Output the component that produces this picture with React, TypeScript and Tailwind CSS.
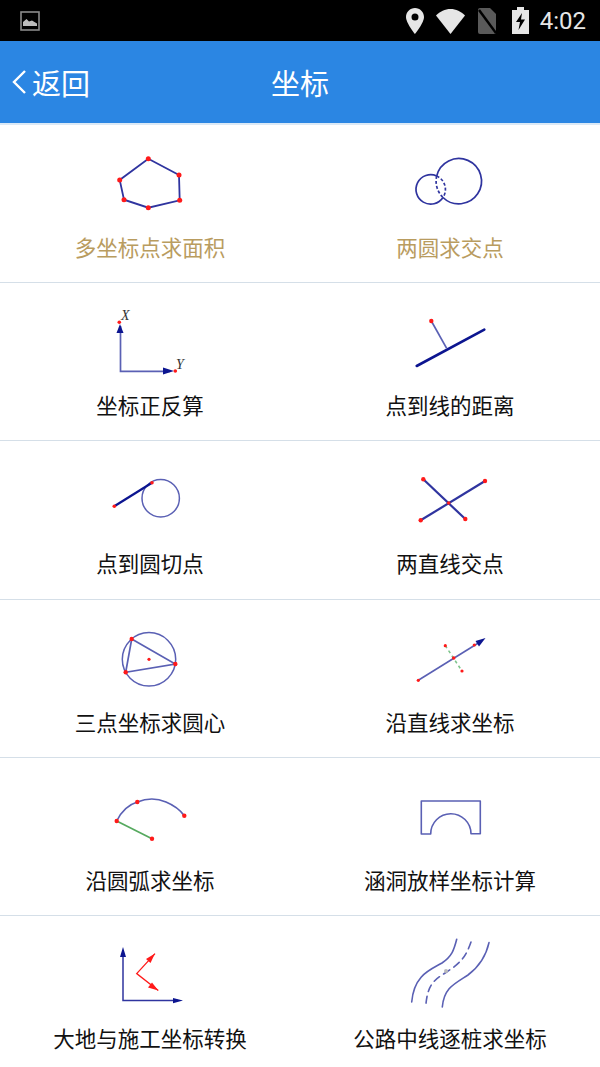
import React from 'react'

const NAVY = '#2f349f'
const DARK = '#0c1590'
const THIN = '#5a60b4'
const RED = '#ff1a1a'

const Dot = ({ x, y, r = 2.2 }: { x: number; y: number; r?: number }) => (
  <circle cx={x} cy={y} r={r} fill={RED} />
)

const Polygon = () => {
  const pts: [number, number][] = [
    [58.3, 17.7],
    [89, 34],
    [89.7, 59.3],
    [58.3, 66.7],
    [34, 58.7],
    [29.7, 39],
  ]
  return (
    <>
      <polygon points={pts.map((p) => p.join(',')).join(' ')} fill="none" stroke={NAVY} strokeWidth={1.8} />
      {pts.map((p) => (
        <Dot key={p[0]} x={p[0]} y={p[1]} r={2.5} />
      ))}
    </>
  )
}

const TwoCircles = () => (
  <g fill="none" stroke={NAVY} strokeWidth={1.7}>
    <path d="M46.7 35A22.7 22.7 0 1 1 53 56.5" />
    <path d="M46.7 35A14.7 14.7 0 1 0 53 56.5" />
    <path d="M46.7 35A14.7 14.7 0 0 1 53 56.5" strokeDasharray="3 2" />
    <path d="M46.7 35A22.7 22.7 0 0 0 53 56.5" strokeDasharray="3 2" />
  </g>
)

const Axes = () => (
  <>
    <path d="M30.5 27V72.3H80" fill="none" stroke={THIN} strokeWidth={1.7} />
    <path d="M30 25L26.500 34H33.500Z" fill={DARK} />
    <path d="M84 72L73 68.500V75.500Z" fill={DARK} />
    <Dot x={29.3} y={23.3} r={1.8} />
    <Dot x={85.3} y={72} r={1.8} />
    <text x={31} y={21} fontSize={14} fontStyle="italic" fontFamily="'Liberation Serif', serif" fill="#333">
      X
    </text>
    <text x={86} y={70} fontSize={14} fontStyle="italic" fontFamily="'Liberation Serif', serif" fill="#333">
      Y
    </text>
  </>
)

const PointToLine = () => (
  <>
    <line x1={26.7} y1={67} x2={94.3} y2={30.7} stroke={DARK} strokeWidth={2.6} strokeLinecap="round" />
    <line x1={41.3} y1={22} x2={56.7} y2={49.3} stroke={THIN} strokeWidth={1.7} />
    <Dot x={41.3} y={22} />
  </>
)

const Tangent = () => (
  <>
    <circle cx={70.7} cy={41.3} r={18.7} fill="none" stroke={THIN} strokeWidth={1.5} />
    <line x1={24.3} y1={49.3} x2={62} y2={25.7} stroke={DARK} strokeWidth={2.2} />
    <Dot x={24.3} y={49.3} r={1.8} />
    <Dot x={62} y={25.7} r={1.8} />
  </>
)

const Crossing = () => (
  <>
    <line x1={33.3} y1={22.3} x2={75.3} y2={62} stroke={NAVY} strokeWidth={2.2} />
    <line x1={30.7} y1={63.3} x2={95} y2={24} stroke={NAVY} strokeWidth={2.2} />
    <Dot x={33.3} y={22.3} />
    <Dot x={75.3} y={62} />
    <Dot x={30.7} y={63.3} />
    <Dot x={95} y={24} />
    <Dot x={58.7} y={46} r={1.8} />
  </>
)

const Circumcircle = () => (
  <>
    <circle cx={59} cy={43.3} r={26.7} fill="none" stroke={THIN} strokeWidth={1.5} />
    <polygon points="41.7,23 85.3,48 35.7,56.3" fill="none" stroke={THIN} strokeWidth={1.7} />
    <Dot x={41.7} y={23} />
    <Dot x={85.3} y={48} />
    <Dot x={35.7} y={56.3} />
    <Dot x={59} y={43.3} r={1.6} />
  </>
)

const AlongLine = () => (
  <>
    <line x1={55.3} y1={29.7} x2={72} y2={55} stroke="#7cc48a" strokeWidth={1.5} strokeDasharray="3 3" />
    <line x1={28.3} y1={64.3} x2={90} y2={26} stroke={THIN} strokeWidth={1.6} />
    <path d="M95.5 22L85.5 25L89 30.5Z" fill={DARK} />
    <Dot x={28.3} y={64.3} r={1.6} />
    <Dot x={84.3} y={29} r={1.6} />
    <Dot x={63.7} y={42} r={1.8} />
    <Dot x={55.3} y={29.7} r={1.6} />
    <Dot x={72} y={55} r={1.6} />
  </>
)

const Arc = () => (
  <>
    <path d="M26.7 47Q34 32 47.3 28Q62 22 76 28Q88 33 94.3 41.7" fill="none" stroke={THIN} strokeWidth={1.7} />
    <line x1={26.7} y1={47} x2={62} y2={64.7} stroke="#55a95e" strokeWidth={1.7} />
    <Dot x={26.7} y={47} />
    <Dot x={47.3} y={28} />
    <Dot x={94.3} y={41.7} />
    <Dot x={62} y={64.7} />
  </>
)

const Culvert = () => (
  <path
    d="M31.3 27H90.3V59.7H81A20 20 0 0 0 40.7 60H31.3Z"
    fill="none"
    stroke={THIN}
    strokeWidth={1.6}
    strokeLinejoin="round"
  />
)

const Transform = () => (
  <>
    <path d="M33 18V68.6H88" fill="none" stroke={NAVY} strokeWidth={1.5} />
    <path d="M33 15L30 25H36Z" fill={DARK} />
    <path d="M93 68.6L83 66V71.2Z" fill={DARK} />
    <path d="M65 21.6L46.7 41.6L68.3 58.6" fill="none" stroke={RED} strokeWidth={1.3} />
    <path d="M65 21.6L56 27L60.5 31Z" fill={RED} />
    <path d="M68.3 58.6L62 50.5L58 55.5Z" fill={RED} />
  </>
)

const Road = () => (
  <g fill="none" stroke={THIN} strokeWidth={1.6} strokeLinecap="round">
    <path d="M66.7 7.3C64 18 62 24 52 31C40 38 24 43 21.7 70" />
    <path d="M81 10C76 24 72 30 56.7 40C44 48 38 52 36 71.6" strokeDasharray="7 5" />
    <path d="M99 10.6C96 24 90 34 78 43C64 52 54 56 52.3 75" />
    <circle cx={56} cy={39} r={2} fill="#bbb" stroke="none" />
  </g>
)

const rows: { label: string; icon: React.ReactNode; active?: boolean }[][] = [
  [
    { label: '多坐标点求面积', icon: <Polygon />, active: true },
    { label: '两圆求交点', icon: <TwoCircles />, active: true },
  ],
  [
    { label: '坐标正反算', icon: <Axes /> },
    { label: '点到线的距离', icon: <PointToLine /> },
  ],
  [
    { label: '点到圆切点', icon: <Tangent /> },
    { label: '两直线交点', icon: <Crossing /> },
  ],
  [
    { label: '三点坐标求圆心', icon: <Circumcircle /> },
    { label: '沿直线求坐标', icon: <AlongLine /> },
  ],
  [
    { label: '沿圆弧求坐标', icon: <Arc /> },
    { label: '涵洞放样坐标计算', icon: <Culvert /> },
  ],
  [
    { label: '大地与施工坐标转换', icon: <Transform /> },
    { label: '公路中线逐桩求坐标', icon: <Road /> },
  ],
]

function StatusBar() {
  return (
    <div className="flex h-[41px] shrink-0 items-center bg-black pl-5 pr-[14px]">
      <svg width="20" height="20" viewBox="0 0 20 20">
        <rect x="1" y="1" width="18" height="18" fill="none" stroke="#8a8a8a" strokeWidth="1.6" />
        <path d="M3 15V11L6.500 8L9 10.500L12 9.500L17 12.500V15Z" fill="#bdbdbd" />
      </svg>
      <svg className="ml-auto" width="18" height="26" viewBox="0 0 18 26">
        <path
          fillRule="evenodd"
          d="M9 0C4 0 0 4 0 9C0 15 9 26 9 26C9 26 18 15 18 9C18 4 14 0 9 0ZM9 12.500A3.500 3.500 0 1 1 9 5.500A3.500 3.500 0 0 1 9 12.500Z"
          fill="#e6e6e6"
        />
      </svg>
      <svg className="ml-3" width="29" height="26" viewBox="0 0 29 26">
        <path d="M14.500 26L0 7.500C4 3.500 9 1 14.500 1C20 1 25 3.500 29 7.500Z" fill="#e6e6e6" />
      </svg>
      <svg className="ml-[13px]" width="18" height="26" viewBox="0 0 18 26">
        <path d="M2 0H12L18 6V24A2 2 0 0 1 16 26H2A2 2 0 0 1 0 24V2A2 2 0 0 1 2 0Z" fill="#5a5a5a" />
        <path d="M1 2L18 25" stroke="#000" strokeWidth="2.500" />
      </svg>
      <svg className="ml-4" width="17" height="27" viewBox="0 0 17 27">
        <path d="M5 0H12V3H17V27H0V3H5Z" fill="#e6e6e6" />
        <path d="M10 6L4 15H8L6.500 23L13 12.500H9Z" fill="#000" />
      </svg>
      <span className="ml-[11px] font-['Roboto',sans-serif] text-[24px] leading-none text-[#e6e6e6]">4:02</span>
    </div>
  )
}

function Header() {
  return (
    <div className="grid h-[82px] shrink-0 grid-cols-3 items-center bg-[#2b86e3] text-white">
      <div className="flex items-center pl-3">
        <svg width="14" height="24" viewBox="0 0 14 24">
          <path d="M13 1L2 12L13 23" fill="none" stroke="#fff" strokeWidth="2.400" />
        </svg>
        <span className="ml-[6px] text-[29px] leading-none">返回</span>
      </div>
      <span className="justify-self-center text-[29px] leading-none">坐标</span>
    </div>
  )
}

export default function App() {
  return (
    <div className="flex h-[1067px] w-[600px] flex-col overflow-hidden bg-white font-['Noto_Sans_CJK_SC',sans-serif]">
      <StatusBar />
      <Header />
      <div className="h-[1.6px] shrink-0 bg-[#dbe9f6]" />
      <div className="grid shrink-0 grid-rows-[repeat(6,158.33px)]">
        {rows.map((row) => (
          <div key={row[0].label} className="grid grid-cols-2 border-b border-[#d5dfe8] last:border-b-0">
            {row.map((item) => (
              <div key={item.label} className="flex flex-col items-center pt-4">
                <svg width="120" height="90" viewBox="0 0 120 90">
                  {item.icon}
                </svg>
                <span
                  className={`mt-px text-[21.500px] leading-[30px] ${
                    item.active ? 'text-[#b99c5f]' : 'text-[#111111]'
                  }`}
                >
                  {item.label}
                </span>
              </div>
            ))}
          </div>
        ))}
      </div>
    </div>
  )
}
